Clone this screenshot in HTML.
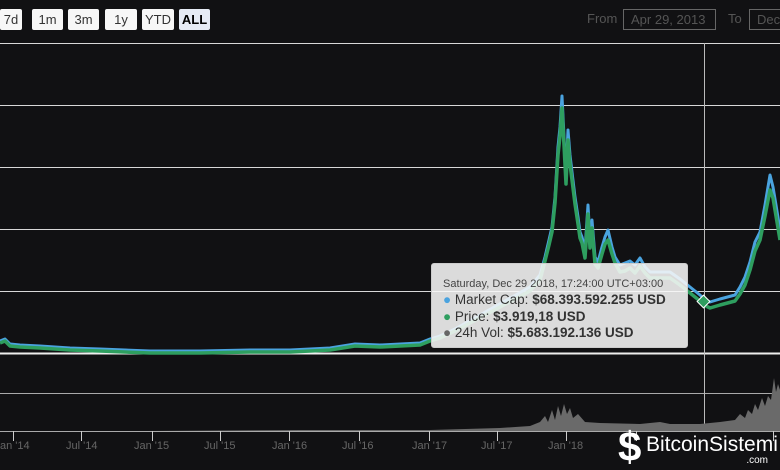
<!DOCTYPE html>
<html><head><style>
body{margin:0;width:780px;height:470px;background:#111113;overflow:hidden;position:relative;font-family:"Liberation Sans",sans-serif}
.b{position:absolute;top:9px;height:21px;background:#f7f7f7;border-radius:2px;color:#333;font-size:13px;line-height:21px;text-align:center}
.lbl{position:absolute;top:11px;color:#555;font-size:13px}
.box{position:absolute;top:9px;height:19px;border:1px solid #666;color:#555;font-size:13px;line-height:19px;padding-left:7px;box-sizing:content-box}
.ax{position:absolute;top:440px;color:#666;font-size:11px}
.tt{position:absolute;left:431px;top:263px;width:257px;height:85px;background:rgba(247,247,247,0.88);border:1px solid #ccc;border-radius:3px;color:#333;box-sizing:border-box}
</style></head><body>
<div class="b" style="left:0;width:22px">7d</div>
<div class="b" style="left:32px;width:31px">1m</div>
<div class="b" style="left:68px;width:31px">3m</div>
<div class="b" style="left:105px;width:32px">1y</div>
<div class="b" style="left:142px;width:32px">YTD</div>
<div class="b" style="left:179px;width:31px;background:#e6ebf5;font-weight:bold;color:#000">ALL</div>
<div class="lbl" style="left:587px">From</div>
<div class="box" style="left:623px;width:84px">Apr 29, 2013</div>
<div class="lbl" style="left:728px">To</div>
<div class="box" style="left:749px;width:40px">Dec</div>
<svg width="780" height="470" style="position:absolute;left:0;top:0">
<g stroke="#d8d8d8" stroke-width="1">
<line x1="0" y1="43.5" x2="780" y2="43.5"/><line x1="0" y1="105.5" x2="780" y2="105.5"/>
<line x1="0" y1="167.5" x2="780" y2="167.5"/><line x1="0" y1="229.5" x2="780" y2="229.5"/>
<line x1="0" y1="291.5" x2="780" y2="291.5"/><line x1="0" y1="393.5" x2="780" y2="393.5" stroke="#aaa"/>
<line x1="0" y1="431.5" x2="780" y2="431.5" stroke="#aaa"/>
</g>
<line x1="0" y1="353.5" x2="780" y2="353.5" stroke="#eee" stroke-width="2"/>
<line x1="704.5" y1="43" x2="704.5" y2="431" stroke="#bbb"/>
<g stroke="#ccc"><line x1="13.5" y1="431" x2="13.5" y2="441"/><line x1="81.5" y1="431" x2="81.5" y2="441"/><line x1="152.5" y1="431" x2="152.5" y2="441"/><line x1="220.5" y1="431" x2="220.5" y2="441"/><line x1="289.5" y1="431" x2="289.5" y2="441"/><line x1="359.5" y1="431" x2="359.5" y2="441"/><line x1="429.5" y1="431" x2="429.5" y2="441"/><line x1="497.5" y1="431" x2="497.5" y2="441"/><line x1="566.5" y1="431" x2="566.5" y2="441"/><line x1="636.5" y1="431" x2="636.5" y2="441"/><line x1="773.5" y1="431" x2="773.5" y2="441"/></g>
<polygon fill="#6a6a6a" points="150,431 300,430 430,430 500,428 530,426 540,422 545,416 548,422 552,410 555,420 558,406 561,416 564,404 567,414 570,408 573,418 578,414 585,422 600,423 640,424 660,422 670,424 700,424 720,422 735,420 740,414 745,418 748,410 752,414 755,404 758,410 762,398 765,406 768,396 771,400 774,378 776,392 778,384 780,390 780,431"/>
<polyline fill="none" stroke="#4aa3df" stroke-width="3" stroke-linejoin="round" points="0,341 5,339 10,344 20,345 40,346 70,348 100,349 150,351 200,351 250,350 290,350 330,348 355,344 380,345 420,343 430,339 440,336 455,329 530,287 540,275 545,257 549,240 552,227 555,197 558,147 560,127 562,96 564,137 566,177 568,130 570,155 572,172 575,197 578,217 580,232 582,237 585,250 588,205 590,242 592,220 595,257 598,262 602,247 605,237 608,230 612,247 615,257 620,265 625,263 630,261 635,265 640,258 645,267 650,272 660,272 670,272 680,279 690,287 700,295 704,299 710,302 720,299 735,295 740,287 745,277 750,262 755,242 760,232 765,205 770,175 773,187 776,205 780,230"/>
<polyline fill="none" stroke="#2e9e5f" stroke-width="3.5" stroke-linejoin="round" points="0,343 5,341 10,346 20,347 40,348 70,350 100,351 150,353 200,353 250,352 290,352 330,350 355,346 380,347 420,345 430,341 440,338 455,331 530,291 540,280 545,261 549,245 552,232 555,203 558,155 560,136 562,108 564,145 566,184 568,140 570,164 572,180 575,204 578,224 580,238 582,243 585,258 588,214 590,248 592,228 595,264 598,268 602,254 605,244 608,240 612,254 615,263 620,272 625,271 630,268 635,273 640,266 645,273 650,278 660,278 670,278 680,285 690,293 700,301 704,305 710,308 720,305 735,301 740,294 745,285 750,270 755,251 760,240 765,216 770,190 773,198 776,216 780,240"/>
<rect x="699" y="297" width="9" height="9" fill="#2e9e5f" stroke="#fff" transform="rotate(45 703.5 301.5)"/>
<text x="618" y="461" font-family="Liberation Sans" font-size="42" font-weight="bold" fill="#fff">$</text>
<text x="646" y="451" font-family="Liberation Sans" font-size="21" fill="#fff">BitcoinSistemi</text>
<text x="768" y="463" font-family="Liberation Sans" font-size="10" fill="#fff" text-anchor="end">.com</text>
</svg>
<div class="ax" style="left:0">an '14</div>
<div class="ax" style="left:66px">Jul '14</div>
<div class="ax" style="left:134px">Jan '15</div>
<div class="ax" style="left:204px">Jul '15</div>
<div class="ax" style="left:272px">Jan '16</div>
<div class="ax" style="left:342px">Jul '16</div>
<div class="ax" style="left:412px">Jan '17</div>
<div class="ax" style="left:481px">Jul '17</div>
<div class="ax" style="left:548px">Jan '18</div>
<div class="tt">
<div style="position:absolute;left:11px;top:14px;font-size:11px;color:#444">Saturday, Dec 29 2018, 17:24:00 UTC+03:00</div>
<div style="position:absolute;left:11px;top:28px;font-size:13.5px;line-height:16.5px">
<div><span style="color:#4aa3df">●</span> Market Cap: <b>$68.393.592.255 USD</b></div>
<div><span style="color:#2e9e5f">●</span> Price: <b>$3.919,18 USD</b></div>
<div><span style="color:#666">●</span> 24h Vol: <b>$5.683.192.136 USD</b></div>
</div></div>
</body></html>
